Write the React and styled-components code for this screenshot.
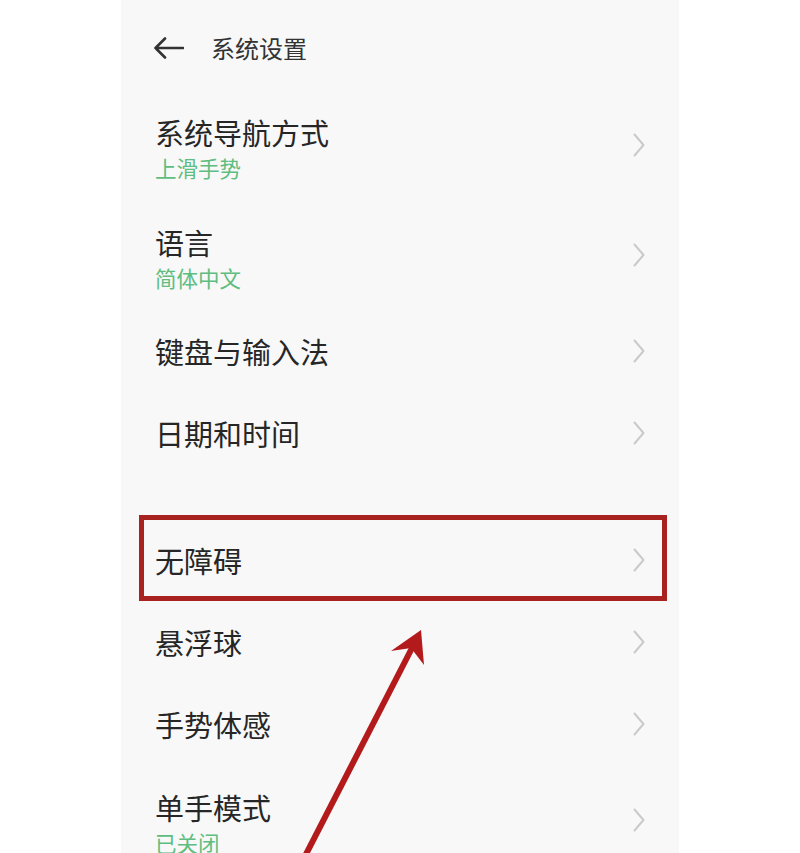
import { styled, createGlobalStyle } from 'styled-components'

const GlobalStyle = createGlobalStyle`
  html, body {
    margin: 0;
    padding: 0;
    background: #ffffff;
  }
  body {
    font-family: "Noto Sans CJK SC", "Noto Sans", sans-serif;
  }
`

const items = [
  { title: '系统导航方式', sub: '上滑手势' },
  { title: '语言', sub: '简体中文' },
  { title: '键盘与输入法' },
  { title: '日期和时间' },
  { title: '无障碍', group: true, marked: true },
  { title: '悬浮球' },
  { title: '手势体感' },
  { title: '单手模式', sub: '已关闭' },
]

const App = () => {
  return (
    <Page>
      <GlobalStyle />
      <Screen>
        <Header>
          <BackIcon viewBox="0 0 30 22">
            <path d="M1.5 11H29M11 1.5L1.5 11L11 20.5" />
          </BackIcon>
          <HeaderTitle>系统设置</HeaderTitle>
        </Header>
        {items.map((item) => (
          <Row key={item.title} $tall={!!item.sub} $group={item.group}>
            <Texts $tall={!!item.sub}>
              <Title>{item.title}</Title>
              {item.sub && <Sub>{item.sub}</Sub>}
            </Texts>
            <Chevron viewBox="0 0 12 24">
              <path d="M1.5 1.5L10.5 12L1.5 22.5" />
            </Chevron>
            {item.marked && <Marker />}
          </Row>
        ))}
      </Screen>
      <Pointer viewBox="0 0 800 853">
        <line x1="302" y1="862" x2="412" y2="648" />
        <polygon points="421,630 391,651 411,648 424,665" />
      </Pointer>
    </Page>
  )
}

const Page = styled.div`
  position: relative;
  display: flex;
  justify-content: center;
  width: 800px;
  height: 853px;
  overflow: hidden;
  background: #ffffff;
`

const Screen = styled.div`
  display: flex;
  flex-direction: column;
  width: 558px;
  height: 853px;
  background: #f8f8f8;
  overflow: hidden;
`

const Header = styled.div`
  display: flex;
  align-items: center;
  flex-shrink: 0;
  height: 90px;
  padding: 6px 0 0 33px;
  box-sizing: border-box;
  gap: 27px;
`

const BackIcon = styled.svg`
  width: 30px;
  height: 22px;
  fill: none;
  stroke: #333333;
  stroke-width: 2.6;
  stroke-linecap: round;
  stroke-linejoin: round;
`

const HeaderTitle = styled.span`
  font-size: 24px;
  line-height: 32px;
  color: #333333;
`

const Row = styled.div`
  position: relative;
  display: flex;
  align-items: center;
  justify-content: space-between;
  flex-shrink: 0;
  height: ${(p) => (p.$tall ? '110px' : '82px')};
  margin-top: ${(p) => (p.$group ? '45px' : '0')};
  padding: 0 34px;
  box-sizing: border-box;
`

const Texts = styled.div`
  display: flex;
  flex-direction: column;
  padding-top: ${(p) => (p.$tall ? '5px' : '0')};
`

const Title = styled.span`
  font-size: 29px;
  line-height: 40px;
  color: #262626;
`

const Sub = styled.span`
  font-size: 21.5px;
  line-height: 32px;
  color: #5fbd80;
`

const Chevron = styled.svg`
  width: 12px;
  height: 24px;
  fill: none;
  stroke: #cacaca;
  stroke-width: 2;
  stroke-linecap: round;
  stroke-linejoin: round;
`

const Marker = styled.div`
  position: absolute;
  left: 18px;
  right: 12px;
  top: -4px;
  bottom: 0;
  border: 5px solid #a82320;
  pointer-events: none;
`

const Pointer = styled.svg`
  position: absolute;
  top: 0;
  left: 0;
  width: 800px;
  height: 853px;
  pointer-events: none;

  line {
    stroke: #b31a1c;
    stroke-width: 6;
  }
  polygon {
    fill: #b31a1c;
  }
`

export default App
